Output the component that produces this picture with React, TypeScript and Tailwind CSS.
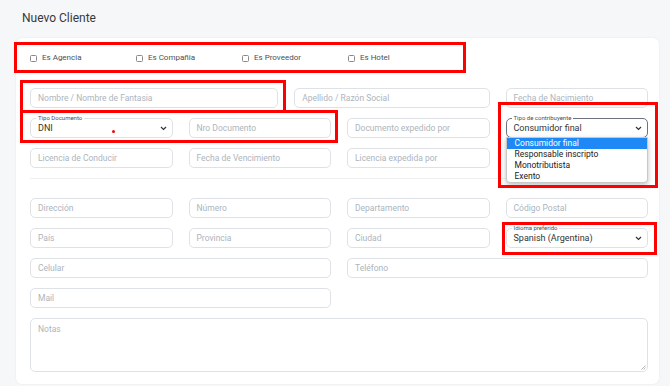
import React from "react";

const font = { fontFamily: "Roboto, 'Liberation Sans', sans-serif" };

function Field({ placeholder, span }: { placeholder: string; span: string }) {
  return (
    <div className={`${span} h-[20px] rounded-[5px] border border-[#dee2e6] bg-white flex items-center px-[7px] text-[8.5px] text-[#adb5bd]`}>
      {placeholder}
    </div>
  );
}

function Chevron() {
  return (
    <svg width="7" height="5" viewBox="0 0 7 5" className="shrink-0">
      <path d="M1 1 L3.5 3.5 L6 1" fill="none" stroke="#333" strokeWidth="1.2" />
    </svg>
  );
}

function FloatSelect({ label, value, span, focused }: { label: string; value: string; span: string; focused?: boolean }) {
  return (
    <div
      className={`${span} relative h-[20px] rounded-[5px] border bg-white flex items-center justify-between pl-[7px] pr-[5px] text-[9px] text-[#333] ${
        focused ? "border-[#6b7280]" : "border-[#dee2e6]"
      }`}
    >
      <span className="absolute left-[5px] top-[-5px] bg-white px-[2px] text-[6px] leading-[8px] text-[#495057]">{label}</span>
      <span className="pt-[2px]">{value}</span>
      <Chevron />
    </div>
  );
}

function Check({ label }: { label: string }) {
  return (
    <div className="w-[106px] flex items-center gap-[5px] text-[8px] text-[#495057]">
      <span className="w-[7px] h-[7px] border border-[#8a8a8a] rounded-[1.5px] bg-white" />
      <span>{label}</span>
    </div>
  );
}

export default function App() {
  return (
    <div className="relative w-[670px] h-[386px] overflow-hidden bg-[#f6f7f9]" style={font}>
      <div className="pl-[22px] pt-[9px] h-[38px] text-[12px] text-[#343a40]">Nuevo Cliente</div>

      <div className="ml-[16px] w-[643px] h-[346px] rounded-[6px] bg-white shadow-[0_0_2px_rgba(0,0,0,0.08)] pl-[14px] pr-[11px]">
        <div className="h-[50px] flex items-center pb-[10px]">
          <Check label="Es Agencia" />
          <Check label="Es Compañia" />
          <Check label="Es Proveedor" />
          <Check label="Es Hotel" />
        </div>

        <div className="grid grid-cols-12 gap-x-4 gap-y-[10px]">
          <Field span="col-span-5" placeholder="Nombre / Nombre de Fantasia" />
          <Field span="col-span-4" placeholder="Apellido / Razón Social" />
          <Field span="col-span-3" placeholder="Fecha de Nacimiento" />

          <FloatSelect span="col-span-3" label="Tipo Documento" value="DNI" />
          <Field span="col-span-3" placeholder="Nro Documento" />
          <Field span="col-span-3" placeholder="Documento expedido por" />
          <div className="col-span-3 relative z-10">
            <FloatSelect span="" label="Tipo de contribuyente" value="Consumidor final" focused />
            <div className="absolute left-0 right-0 top-[19px] bg-white border border-[#c8c8c8] rounded-b-[4px] shadow-[0_2px_5px_rgba(0,0,0,0.25)] text-[8.5px] text-[#222]">
              <div className="h-[11px] leading-[11px] pl-[8px] bg-[#1e88f5] text-white">Consumidor final</div>
              <div className="h-[11px] leading-[11px] pl-[8px]">Responsable inscripto</div>
              <div className="h-[11px] leading-[11px] pl-[8px]">Monotributista</div>
              <div className="h-[11px] leading-[11px] pl-[8px]">Exento</div>
            </div>
          </div>

          <Field span="col-span-3" placeholder="Licencia de Conducir" />
          <Field span="col-span-3" placeholder="Fecha de Vencimiento" />
          <Field span="col-span-3" placeholder="Licencia expedida por" />
          <div className="col-span-3" />
        </div>

        <div className="mt-[10px] mb-[19px] border-t border-[#eef0f2]" />

        <div className="grid grid-cols-12 gap-x-4 gap-y-[10px]">
          <Field span="col-span-3" placeholder="Dirección" />
          <Field span="col-span-3" placeholder="Número" />
          <Field span="col-span-3" placeholder="Departamento" />
          <Field span="col-span-3" placeholder="Código Postal" />

          <Field span="col-span-3" placeholder="País" />
          <Field span="col-span-3" placeholder="Provincia" />
          <Field span="col-span-3" placeholder="Ciudad" />
          <FloatSelect span="col-span-3" label="Idioma preferido" value="Spanish (Argentina)" />

          <Field span="col-span-6" placeholder="Celular" />
          <Field span="col-span-6" placeholder="Teléfono" />

          <Field span="col-span-6" placeholder="Mail" />
          <div className="col-span-6" />

          <div className="col-span-12 relative h-[54px] rounded-[5px] border border-[#dee2e6] px-[7px] pt-[4px] text-[8.5px] text-[#adb5bd]">
            Notas
            <svg width="5" height="5" viewBox="0 0 5 5" className="absolute right-[1px] bottom-[1px]">
              <path d="M4.5 0.5 L0.5 4.5 M4.5 2.5 L2.5 4.5" stroke="#999" strokeWidth="0.7" />
            </svg>
          </div>
        </div>
      </div>

      {/* annotation overlay */}
      <div className="absolute left-[14px] top-[42px] w-[452px] h-[31px] border-[3px] border-[#ff0000] pointer-events-none" />
      <div className="absolute left-[20px] top-[80px] w-[266px] h-[33px] border-[3px] border-[#ff0000] pointer-events-none" />
      <div className="absolute left-[20px] top-[110px] w-[318px] h-[33px] border-[3px] border-[#ff0000] pointer-events-none" />
      <div className="absolute left-[498px] top-[102px] w-[160px] h-[86px] border-[3px] border-[#ff0000] pointer-events-none z-20" />
      <div className="absolute left-[502px] top-[222px] w-[155px] h-[33px] border-[3px] border-[#ff0000] pointer-events-none" />
      <div className="absolute left-[112px] top-[130px] w-[3px] h-[3px] rounded-full bg-[#ff0000]" />
    </div>
  );
}
